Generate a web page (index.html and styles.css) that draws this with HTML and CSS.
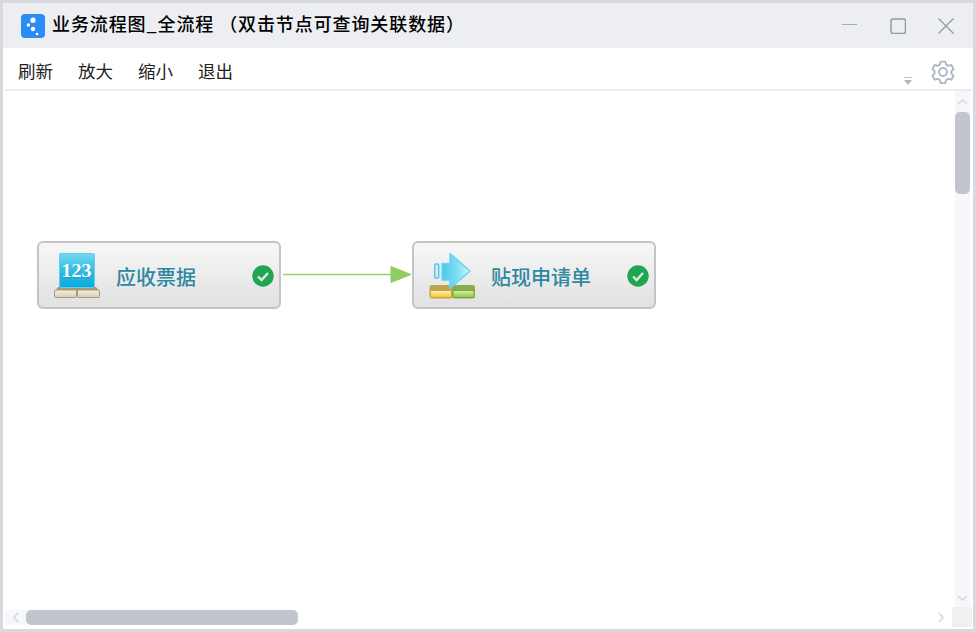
FILE: index.html
```html
<!DOCTYPE html>
<html lang="zh">
<head>
<meta charset="utf-8">
<title>业务流程图</title>
<link rel="stylesheet" href="styles.css">
</head>
<body>
<div class="window">
  <header class="titlebar">
    <svg class="logo" width="24" height="24" viewBox="0 0 24 24">
      <rect width="24" height="24" rx="4" fill="#2a8cf4"/>
      <circle cx="12" cy="6.2" r="2.6" fill="#fff"/>
      <circle cx="7.4" cy="11" r="1.7" fill="#fff"/>
      <circle cx="12" cy="15" r="2.2" fill="#fff"/>
      <circle cx="16" cy="20" r="1.3" fill="#fff"/>
    </svg>
    <h1 class="title">业务流程图_全流程 （双击节点可查询关联数据）</h1>
    <div class="controls">
      <svg width="16" height="16" viewBox="0 0 16 16"><path d="M0 6.500H15" stroke="#a3abbd" stroke-width="1" fill="none"/></svg>
      <svg width="16" height="16" viewBox="0 0 16 16"><rect x="1" y="1" width="14.500" height="14.500" rx="2" stroke="#8f99b0" stroke-width="1.500" fill="none"/></svg>
      <svg width="16" height="16" viewBox="0 0 16 16"><path d="M.5.500 15.500 15.500M15.500.500.500 15.500" stroke="#8f99b0" stroke-width="1.300" fill="none"/></svg>
    </div>
  </header>
  <nav class="toolbar">
    <a class="tool">刷新</a>
    <a class="tool">放大</a>
    <a class="tool">缩小</a>
    <a class="tool">退出</a>
    <svg class="collapse" width="10" height="10" viewBox="0 0 10 10"><path d="M1 1.500H9" stroke="#c4c7cd" stroke-width="1.200"/><path d="M1 4H9L5 9Z" fill="#b4b7be"/></svg>
    <svg class="gear" width="24" height="24" viewBox="0 0 24 24" fill="none" stroke="#b0b6c6" stroke-width="1.900" stroke-linejoin="round">
      <path d="M9.700 1.600h4.600l.8 3 2.200 1.300 3-.9 2.300 4-2.200 2.100v2.500l2.200 2.100-2.300 4-3-.9-2.200 1.300-.8 3H9.700l-.8-3-2.200-1.300-3 .9-2.300-4 2.200-2.100V11L1.400 9l2.300-4 3 .9 2.200-1.300z"/>
      <circle cx="12" cy="12" r="4"/>
    </svg>
  </nav>
  <main class="stage">
    <div class="canvas">
      <div class="node node-a">
        <svg class="node-icon" width="48" height="48" viewBox="0 0 48 48">
          <defs>
            <linearGradient id="blue" x1="0" y1="0" x2="0" y2="1"><stop offset="0" stop-color="#74d8f0"/><stop offset=".5" stop-color="#30bee6"/><stop offset="1" stop-color="#08a9dc"/></linearGradient>
            <linearGradient id="beige" x1="0" y1="0" x2="0" y2="1"><stop offset="0" stop-color="#f6f1e2"/><stop offset="1" stop-color="#d6ccb4"/></linearGradient>
          </defs>
          <path d="M4 35h38l3 4H1z" fill="#a59674"/>
          <rect x="5.500" y="1.500" width="35" height="34" rx="1.500" fill="url(#blue)" stroke="#66cfe8"/>
          <text class="digits digits-shadow" x="23" y="26" text-anchor="middle" textLength="30" lengthAdjust="spacingAndGlyphs">123</text>
          <text class="digits" x="22.500" y="25" text-anchor="middle" textLength="30" lengthAdjust="spacingAndGlyphs">123</text>
          <rect x=".5" y="38" width="22" height="7.500" rx="1" fill="url(#beige)" stroke="#a89a7c"/>
          <rect x="23.500" y="38" width="22" height="7.500" rx="1" fill="url(#beige)" stroke="#a89a7c"/>
        </svg>
        <span class="node-label">应收票据</span>
        <svg class="node-check" width="22" height="22" viewBox="0 0 22 22"><circle cx="11" cy="11" r="10.700" fill="#22a552"/><path d="M6 11.500 9.600 15 16 8" stroke="#d6efdd" stroke-width="2.400" fill="none"/></svg>
      </div>
      <svg class="link" width="132" height="20" viewBox="0 0 132 20">
        <path d="M0 9.500H112" stroke="#9ccf6d" stroke-width="1.500"/>
        <path d="M108 1.500 128 9.500 108 17.500Z" fill="#90cc5f" stroke="#90cc5f" stroke-linejoin="round"/>
      </svg>
      <div class="node node-b">
        <svg class="node-icon" width="48" height="48" viewBox="0 0 48 48">
          <defs>
            <linearGradient id="cyan" x1="0" y1="0" x2="1" y2="0"><stop offset="0" stop-color="#48c8ec"/><stop offset=".55" stop-color="#80def5"/><stop offset="1" stop-color="#c8f4fb"/></linearGradient>
            <linearGradient id="gold" x1="0" y1="0" x2="0" y2="1"><stop offset="0" stop-color="#fff4b8"/><stop offset="1" stop-color="#efc63a"/></linearGradient>
            <linearGradient id="lime" x1="0" y1="0" x2="0" y2="1"><stop offset="0" stop-color="#d8f0a8"/><stop offset="1" stop-color="#8fc446"/></linearGradient>
          </defs>
          <rect x=".5" y="33" width="23" height="13.500" rx="2.500" fill="#bda353"/>
          <rect x="23" y="33" width="23" height="13.500" rx="2.500" fill="#86ad50"/>
          <rect x="1.500" y="38.500" width="21" height="7" rx="1" fill="url(#gold)" stroke="#d0a52c"/>
          <rect x="24" y="38.500" width="21" height="7" rx="1" fill="url(#lime)" stroke="#7ea83c"/>
          <rect x="5.700" y="12" width="4" height="14" rx="1" fill="#c6f0f9" stroke="#58c6e4" stroke-width="1.400"/>
          <path d="M13 11.500h8V1.500L41 19 21 36.500V28h-8z" fill="url(#cyan)" stroke="#6fd3ec" stroke-width="1.500" stroke-linejoin="round"/>
        </svg>
        <span class="node-label">贴现申请单</span>
        <svg class="node-check" width="22" height="22" viewBox="0 0 22 22"><circle cx="11" cy="11" r="10.700" fill="#22a552"/><path d="M6 11.500 9.600 15 16 8" stroke="#d6efdd" stroke-width="2.400" fill="none"/></svg>
      </div>
    </div>
    <div class="vbar">
      <svg class="arrow" width="15" height="12" viewBox="0 0 15 12"><path d="M3 8 7.500 4 12 8" stroke="#d3d6dc" stroke-width="1.500" fill="none"/></svg>
      <div class="vthumb"></div>
      <svg class="arrow arrow-end" width="15" height="12" viewBox="0 0 15 12"><path d="M3 4 7.500 8 12 4" stroke="#d3d6dc" stroke-width="1.500" fill="none"/></svg>
    </div>
    <div class="hbar">
      <svg class="harrow" width="21" height="15" viewBox="0 0 21 15"><path d="M13 3 9 7.500 13 12" stroke="#d3d6dc" stroke-width="1.500" fill="none"/></svg>
      <div class="hthumb"></div>
      <svg class="harrow-end" width="15" height="15" viewBox="0 0 15 15"><path d="M5 3 9 7.500 5 12" stroke="#d3d6dc" stroke-width="1.500" fill="none"/></svg>
    </div>
    <div class="corner"></div>
  </main>
</div>
</body>
</html>
```

FILE: styles.css
```css
* { box-sizing: border-box; }
html, body { margin: 0; height: 100%; }
body { background: #fff; font-family: "Noto Sans CJK SC", "Noto Sans", sans-serif; overflow: hidden; }

.window {
  width: 976px;
  height: 632px;
  border: 3px solid #d8d9e0;
  display: flex;
  flex-direction: column;
  background: #fff;
}

.titlebar {
  height: 45px;
  flex: none;
  background: #edeef2;
  display: flex;
  align-items: center;
  padding: 0 19px 0 18px;
}
.logo { flex: none; margin-top: 1px; }
.title {
  margin: 0 0 5px 7px;
  font-size: 18px;
  font-weight: 500;
  letter-spacing: .9px;
  color: #000;
  white-space: pre;
  flex: 1;
}
.controls { display: flex; gap: 32px; margin-top: 1px; }

.toolbar {
  height: 43px;
  flex: none;
  display: flex;
  align-items: center;
  gap: 24px;
  padding: 5px 17px 0 14px;
  border-bottom: 2px solid #eeeeee;
  margin-left: 2px;
  margin-right: 1px;
}
.tool { font-size: 17.500px; line-height: 24px; color: #222; width: 36px; white-space: nowrap; margin-left: -1px; margin-right: 1px; }
.collapse { margin-left: auto; margin-top: 19px; margin-right: -6px; }
.gear { margin-top: 2px; }

.stage {
  flex: 1;
  min-height: 0;
  display: grid;
  grid-template-columns: 1fr 20px;
  grid-template-rows: 1fr 22px;
}
.canvas {
  position: relative;
  overflow: hidden;
}
.node {
  position: absolute;
  width: 244px;
  height: 68px;
  display: flex;
  align-items: center;
  padding: 2px 5px 0 15px;
  border: 2px solid #c4c4c4;
  border-radius: 6px;
  background: linear-gradient(#f7f7f7, #e1e1e1);
}
.node-a { left: 34px; top: 150px; }
.node-b { left: 409px; top: 150px; }
.node-icon { flex: none; }
.node-label {
  margin-left: 14px;
  font-size: 20px;
  font-weight: 500;
  color: #2c87a0;
  white-space: nowrap;
}
.node-check { flex: none; margin-left: auto; }
.digits { font-family: "Liberation Serif", serif; font-weight: 700; font-size: 18px; fill: #fff; }
.digits-shadow { fill: #1b8fb8; opacity: .6; }
.link { position: absolute; left: 280px; top: 174px; }

.vbar {
  width: 15px;
  margin-left: 2px;
  background: #f5f7fb;
  display: flex;
  flex-direction: column;
  height: 516px;
}
.arrow { flex: none; margin-top: 5px; }
.vthumb { width: 15px; height: 82px; margin-top: 4px; border-radius: 5px; background: #c1c5ce; }
.arrow-end { margin-top: auto; margin-bottom: 3px; }

.hbar {
  height: 15px;
  margin: 3px 0 0 2px;
  display: flex;
  align-items: center;
}
.harrow { flex: none; background: #f5f7fb; }
.hthumb { width: 272px; height: 15px; border-radius: 5px; background: #c1c5ce; }
.harrow-end { margin-left: auto; margin-right: 4px; }
.corner { width: 20px; height: 20px; margin-left: -1px; background: #f0f0f0; }
```
